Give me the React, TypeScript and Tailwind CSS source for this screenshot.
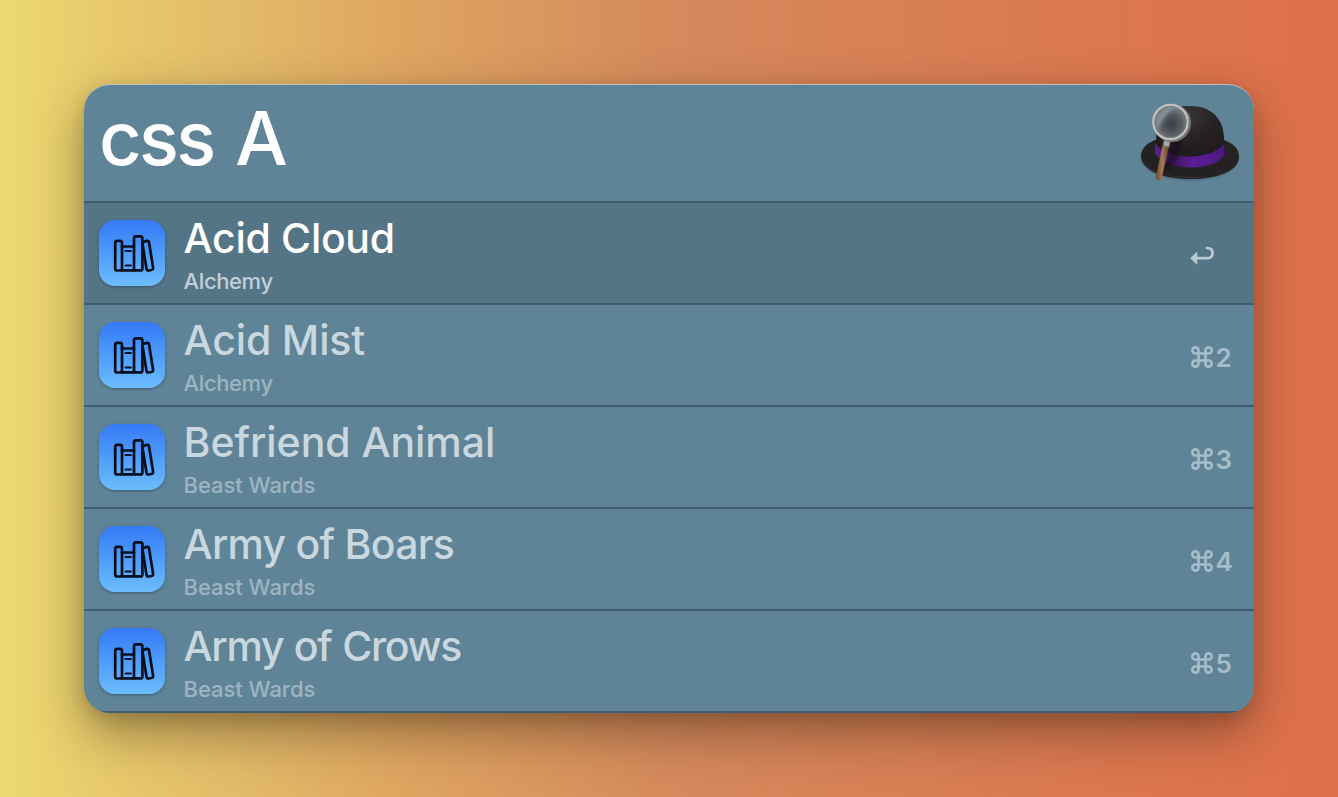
type Result = {
  title: string;
  category: string;
  shortcut?: string;
  titleTracking: string;
  categoryTracking: string;
};

const results: Result[] = [
  { title: "Acid Cloud", category: "Alchemy", titleTracking: "tracking-[-0.3px]", categoryTracking: "tracking-[-0.4px]" },
  { title: "Acid Mist", category: "Alchemy", shortcut: "2", titleTracking: "tracking-[-0.15px]", categoryTracking: "tracking-[-0.4px]" },
  { title: "Befriend Animal", category: "Beast Wards", shortcut: "3", titleTracking: "tracking-[-0.05px]", categoryTracking: "tracking-[-0.05px]" },
  { title: "Army of Boars", category: "Beast Wards", shortcut: "4", titleTracking: "tracking-[-0.75px]", categoryTracking: "tracking-[-0.05px]" },
  { title: "Army of Crows", category: "Beast Wards", shortcut: "5", titleTracking: "tracking-[-1.3px] [word-spacing:1px]", categoryTracking: "tracking-[-0.05px]" },
];

function BooksIcon() {
  return (
    <div className="mt-[17px] h-[66px] w-[66px] shrink-0 rounded-[16px] bg-linear-to-b from-[#3679f6] to-[#6cbcfd] shadow-[0_1px_3px_rgba(20,40,60,0.45)]">
      <svg viewBox="0 0 66 66" className="h-full w-full" fill="none" stroke="#04101f" strokeWidth="2.7" strokeLinejoin="round" strokeLinecap="round">
        <rect x="16.2" y="20.9" width="6.8" height="29.6" rx="2" />
        <path d="M23 26.500H35M23 50.300H35" />
        <path d="M26.500 31h5.400M26.500 45.500h5.400" strokeWidth="1.900" />
        <rect x="35" y="16.400" width="8.400" height="34" rx="2" />
        <path d="M43.600 22.100 48 20.900q1.700-.3 2 1.300l4.100 25.500q.2 1.900-1.600 2.300l-3 .5q-1.700.2-2-1.500l-3.600-23" />
      </svg>
    </div>
  );
}

function HatLogo() {
  return (
    <svg viewBox="0 0 104 88" className="h-[88px] w-[104px]">
      <defs>
        <radialGradient id="crown" cx="0.45" cy="0.15" r="0.8">
          <stop offset="0" stopColor="#3a3637" />
          <stop offset="0.5" stopColor="#272324" />
          <stop offset="1" stopColor="#1c191c" />
        </radialGradient>
        <linearGradient id="band" x1="0" x2="1">
          <stop offset="0" stopColor="#5c218f" />
          <stop offset="0.3" stopColor="#421665" />
          <stop offset="0.55" stopColor="#5b1e98" />
          <stop offset="1" stopColor="#4b187c" />
        </linearGradient>
        <radialGradient id="lens" cx="0.52" cy="0.55" r="0.55">
          <stop offset="0" stopColor="#393c40" />
          <stop offset="0.6" stopColor="#5a5e62" />
          <stop offset="1" stopColor="#7c858b" />
        </radialGradient>
        <linearGradient id="handle" x1="0" x2="1">
          <stop offset="0" stopColor="#6b432b" />
          <stop offset="0.5" stopColor="#a57a55" />
          <stop offset="1" stopColor="#63402b" />
        </linearGradient>
        <filter id="soft" x="-30%" y="-30%" width="160%" height="160%">
          <feGaussianBlur stdDeviation="1.5" />
        </filter>
      </defs>
      <ellipse cx="52" cy="57.5" rx="48" ry="21.5" fill="#354955" opacity=".6" filter="url(#soft)" />
      <path d="M3 55C3 46 11 41 20 38L86 39C94 42 101 47 101 55.500C101 70 80 78 52 78S3 69 3 55Z" fill="#242122" />
      <path d="M5 61C14 82 90 82 99 61C91 74 75 76 52 76S13 72 5 61Z" fill="#3d3c3d" />
      <path d="M17 53C18 38 18 27 24 17C31 6 43 5 53 5C75 5 86 20 86 37L87 53C82 67 21 68 17 53Z" fill="url(#crown)" />
      <path d="M17 42C29 60 72 60 86 43L87 53C77 71 31 71 17 53Z" fill="url(#band)" />
      <path d="M35 35L26 69Q39 66 44 42Z" fill="#160d1c" opacity=".65" filter="url(#soft)" />
      <path d="M24.500 44 31 45 23.500 77Q20.500 80 17.500 76Z" fill="url(#handle)" transform="translate(0 1)" />
      <path d="M27 35 33 36 31 46 25 45Z" fill="#aaa8a7" stroke="#6e7072" strokeWidth="1" />
      <circle cx="33" cy="21.500" r="16" fill="url(#lens)" />
      <path d="M18 26C18 13 26 6 38 6C31 9 27 16 20 27Z" fill="#9fb2bc" opacity=".55" filter="url(#soft)" />
      <circle cx="34" cy="22" r="17.800" fill="none" stroke="#777475" strokeWidth="2.400" />
      <circle cx="32.500" cy="21" r="17.200" fill="none" stroke="#c0c2c3" strokeWidth="2.300" />
      <circle cx="32.500" cy="21" r="15.700" fill="none" stroke="#797d80" strokeWidth=".7" />
    </svg>
  );
}

function ReturnIcon() {
  return (
    <svg viewBox="0 0 26 20" className="h-5 w-[26px]">
      <path d="M6.500 12.200H17Q22.500 12.200 22.500 7Q22.500 2 17 2" fill="none" stroke="#b9cad3" strokeWidth="2.700" strokeLinecap="round" />
      <path d="M.7 12.200 6.800 6.300V18.100Z" fill="#b9cad3" stroke="#b9cad3" strokeWidth="1" strokeLinejoin="round" />
    </svg>
  );
}

function CommandIcon() {
  return (
    <svg viewBox="0 0 22 22" className="h-[22px] w-[22px]" fill="none" stroke="#a5bdca" strokeWidth="2.700">
      <path d="M7.500 7.500V4.500A3.100 3.100 0 1 0 4.400 7.500H17.600A3.100 3.100 0 1 0 14.500 4.500V17.500A3.100 3.100 0 1 0 17.600 14.500H4.400A3.100 3.100 0 1 0 7.500 17.500Z" />
    </svg>
  );
}

function ResultRow({ result }: { result: Result }) {
  const active = !result.shortcut;
  return (
    <li className={`flex h-[102px] border-b-2 border-[#405d6f] pl-[15px] ${active ? "bg-[#547586]" : ""}`}>
      <BooksIcon />
      <div className="ml-[18.6px] grow whitespace-nowrap font-medium">
        <div className={`mt-[10px] h-[50px] text-[41px] leading-[50px] ${result.titleTracking} ${active ? "text-white" : "text-[#c9d7df]"}`}>
          {result.title}
        </div>
        <div className={`mt-[4px] h-[28px] text-[22px] leading-[28px] ${result.categoryTracking} ${active ? "text-[#c0d0d9]" : "text-[#9cb5c3]"}`}>
          {result.category}
        </div>
      </div>
      <div className="flex w-[64px] items-center pt-[6px]">
        {active ? <ReturnIcon /> : (
          <>
            <div className="-mt-[2px] ml-px"><CommandIcon /></div>
            <span className="ml-[2.5px] text-[26px] leading-8 font-semibold text-[#a5bdca]">{result.shortcut}</span>
          </>
        )}
      </div>
    </li>
  );
}

export default function App() {
  return (
    <main
      className="flex h-[797px] w-[1338px] items-start justify-center bg-[linear-gradient(90deg,#ecd970_0%,#e7c86b_9%,#e2ba69_18%,#dea561_30%,#d5895c_50%,#d97b53_75%,#df704a_100%)] pt-[84px]"
      style={{ fontFamily: 'Inter, "Noto Sans", sans-serif' }}
    >
      <section className="h-[629px] w-[1170px] overflow-hidden rounded-[26px] border-t border-[#b6c3c3] bg-[#608497] shadow-[0_20px_50px_rgba(45,30,15,0.42),0_6px_16px_rgba(45,30,15,0.15)]">
        <header className="flex h-[118px] justify-between border-b-2 border-[#405d6f] pl-[15px] pr-3">
          <h1 className="mt-[8px] h-[90px] whitespace-nowrap text-[74px] leading-[90px] font-medium tracking-[-2.7px] text-white [word-spacing:5px]">css A</h1>
          <div className="mt-4"><HatLogo /></div>
        </header>
        <ul>
          {results.map((result) => <ResultRow key={result.title} result={result} />)}
        </ul>
      </section>
    </main>
  );
}
